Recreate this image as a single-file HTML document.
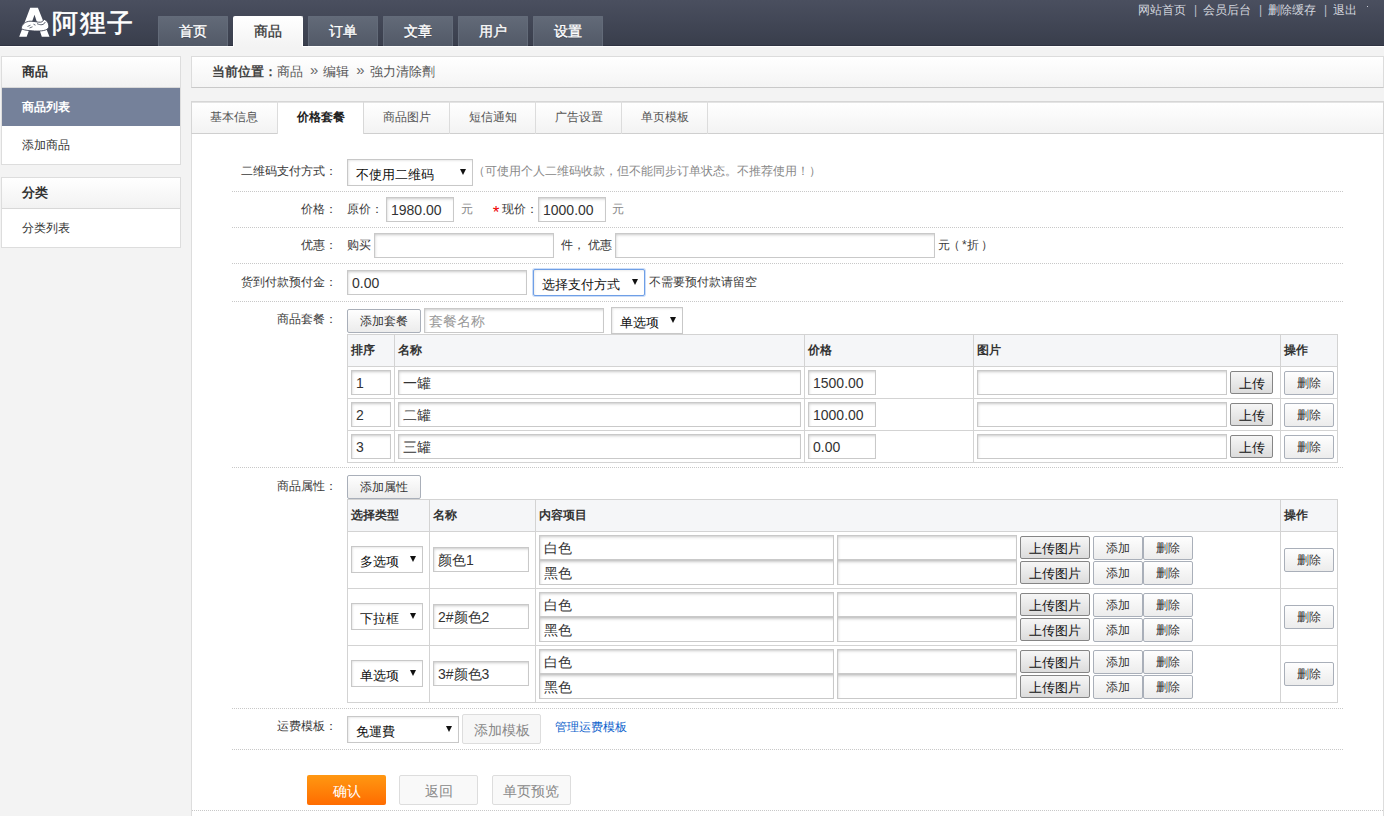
<!DOCTYPE html>
<html><head><meta charset="utf-8">
<style>
*{box-sizing:border-box}
html,body{margin:0;padding:0}
body{width:1384px;height:816px;overflow:hidden;position:relative;background:#f3f3f3;font-family:"Liberation Sans",sans-serif;font-size:12px;color:#333}
.a{position:absolute}
.hdr{left:0;top:0;width:1384px;height:46px;background:linear-gradient(#4a4f5f,#393e4c);border-bottom:1px solid #2f3342}
.hline{left:0;top:46px;width:1384px;height:1px;background:#fff}
.nav{top:16px;width:70px;height:30px;background:linear-gradient(#626a78,#525967);border:1px solid #636b79;border-bottom:0;color:#fff;font-size:14px;font-weight:500;-webkit-text-stroke:0.35px #fff;text-align:center;line-height:28px;border-radius:1px 1px 0 0;text-shadow:0 1px 1px rgba(0,0,0,.25)}
.nav.on{background:linear-gradient(#fff,#f3f3f3);border-color:#fff;color:#333;-webkit-text-stroke:0.3px #333;height:31px;line-height:28px;text-shadow:none;border-radius:2px 2px 0 0}
.toplinks{top:1px;color:#d3d6de;font-size:12px;line-height:18px;white-space:nowrap}
.tsep{color:#b9bdc6}
.toplinks i{font-style:normal;padding:0 6px;color:#b9bdc6}
.sbox{left:1px;width:180px;background:#fff;border:1px solid #ddd}
.shd{height:31px;line-height:30px;padding-left:20px;font-weight:bold;font-size:13px;color:#333;background:linear-gradient(#fff,#f2f2f2);border-bottom:1px solid #d8d8d8}
.sit{height:38px;line-height:38px;padding-left:20px;color:#333}
.sit.on{background:#75819a;color:#fff;font-weight:bold}
.crumb{left:191px;top:56px;width:1193px;height:32px;background:linear-gradient(#fff,#f4f4f4);border:1px solid #dcdcdc;border-bottom-color:#c9c9c9;line-height:28px;padding-left:20px;font-size:13px;color:#555}
.crumb b{color:#444}
.rq{font-size:15px;margin:0 5px 0 7px;color:#666;position:relative;top:-1px}
.panel{left:191px;top:101px;width:1193px;height:730px;background:#fff;border:1px solid #ddd}
.tabs{left:191px;top:101px;width:1193px;height:33px;background:linear-gradient(#fff,#f3f3f3);border:1px solid #d6d6d6;border-bottom-color:#cfcfcf;box-shadow:inset 0 1px 0 #e4e4e4}
.tab{top:101px;height:33px;line-height:33px;text-align:center;color:#555;font-size:12px;border-right:1px solid #dcdcdc}
.tab.on{background:#fff;color:#222;font-weight:bold;height:32px;top:102px;line-height:31px;border-left:1px solid #dcdcdc;border-right-color:#d8d8d8;box-shadow:inset 0 1px 0 #e6e6e6}
.dot{left:232px;width:1111px;height:1px;border-top:1px dotted #c8c8c8}
.lbl{width:110px;left:227px;text-align:right;color:#3a3a3a;line-height:16px}
.txt{color:#3a3a3a;line-height:16px;white-space:nowrap}
.inp{background:#fff;border:1px solid #c9c9c9;box-shadow:inset 1px 2px 3px -1px rgba(0,0,0,.22);font-size:14px;color:#333;padding-left:4px;padding-top:1px;white-space:nowrap;overflow:hidden}
.sel{background:#fff;border:1px solid #c8c8c8;box-shadow:inset 1px 1px 3px -1px rgba(0,0,0,.18);font-size:13.33px;color:#111;padding-left:8px;padding-top:2px;white-space:nowrap}
.sel:after{content:"";position:absolute;right:6px;top:9px;border-left:3px solid transparent;border-right:3px solid transparent;border-top:6px solid #111}
.btn{background:linear-gradient(#fefefe,#ececec);border:1px solid #a9afb9;border-radius:2px;text-align:center;color:#333;font-size:12px}
.ubtn{background:linear-gradient(#f6f6f6,#dcdcdc);border:1px solid #858585;border-radius:2px;text-align:center;color:#111;font-size:13.33px;padding-top:2px}
.tbl{border:1px solid #d3d3d3;background:#fff}
.th{background:#f5f6f8;border-bottom:1px solid #d3d3d3}
.vl{width:1px;background:#d3d3d3}
.hl{height:1px;background:#d3d3d3}
.thx{font-weight:bold;color:#333;line-height:16px}
</style></head><body>
<!-- header -->
<div class="a hdr"></div>
<div class="a hline"></div>
<svg class="a" style="left:16px;top:5px" width="38" height="35" viewBox="0 0 38 35">
  <path d="M14.2 2.8 L21.9 2.8 L33.5 31.8 L25.8 31.8 L18.5 9.7 L10.7 31.8 L3.2 31.8 Z" fill="#fff"/>
  <path d="M5.2 23.5 C5.8 19 9.5 16.5 14 16.2 C18 16 22 17.5 24.5 17.2 C26.5 17 27.5 15.5 28 14.2 C31.5 15.8 33.5 19.5 32.5 22.5 C31.5 25.5 25.5 26.3 18.5 26 C12 25.7 7 25 5.2 23.5 Z" fill="#fff" stroke="#3f4454" stroke-width="0.9"/>
  <path d="M21 18.6 C24.5 20.4 28 20.2 29.2 17" stroke="#4a5060" stroke-width="0.9" fill="none"/>
  <path d="M11.5 21.5 L14.5 20.2 M13.5 23 L16.5 21.8 M17.5 19.2 L19.5 20.2" stroke="#5a606c" stroke-width="0.9" fill="none"/>
</svg>
<div class="a" style="left:52px;top:3px;font-size:26px;color:#fff;line-height:40px;letter-spacing:1.5px;font-weight:normal;-webkit-text-stroke:0.6px #fff">阿狸子</div>
<div class="a nav" style="left:158px">首页</div>
<div class="a nav on" style="left:233px">商品</div>
<div class="a nav" style="left:308px">订单</div>
<div class="a nav" style="left:383px">文章</div>
<div class="a nav" style="left:458px">用户</div>
<div class="a nav" style="left:533px">设置</div>
<div class="a toplinks" style="left:1138px">网站首页</div><div class="a toplinks tsep" style="left:1194px">|</div>
<div class="a toplinks" style="left:1203px">会员后台</div><div class="a toplinks tsep" style="left:1259px">|</div>
<div class="a toplinks" style="left:1268px">删除缓存</div><div class="a toplinks tsep" style="left:1324px">|</div>
<div class="a toplinks" style="left:1333px">退出</div>
<div class="a" style="left:1367px;top:6px;width:1px;height:1px;background:#c9ccd4"></div>

<!-- sidebar -->
<div class="a sbox" style="top:56px;height:109px">
  <div class="shd">商品</div>
  <div class="sit on">商品列表</div>
  <div class="sit">添加商品</div>
</div>
<div class="a sbox" style="top:177px;height:71px">
  <div class="shd">分类</div>
  <div class="sit">分类列表</div>
</div>

<!-- breadcrumb -->
<div class="a crumb"><b>当前位置：</b>商品<span class="rq">&raquo;</span>编辑<span class="rq">&raquo;</span>強力清除劑</div>

<!-- panel -->
<div class="a panel"></div>
<div class="a tabs"></div>
<div class="a tab" style="left:191px;width:87px">基本信息</div>
<div class="a tab on" style="left:277px;width:87px">价格套餐</div>
<div class="a tab" style="left:364px;width:86px">商品图片</div>
<div class="a tab" style="left:450px;width:86px">短信通知</div>
<div class="a tab" style="left:536px;width:86px">广告设置</div>
<div class="a tab" style="left:622px;width:86px">单页模板</div>

<!-- form rows -->
<div class="a lbl" style="top:163px">二维码支付方式：</div>
<div class="a sel" style="left:347px;top:159px;width:126px;height:27px;line-height:25px">不使用二维码</div>
<div class="a txt" style="left:473px;top:163px;color:#888">（可使用个人二维码收款，但不能同步订单状态。不推荐使用！）</div>
<div class="a dot" style="top:191px"></div>

<div class="a lbl" style="top:201px">价格：</div>
<div class="a txt" style="left:347px;top:201px">原价：</div>
<div class="a inp" style="left:386px;top:197px;width:68px;height:25px;line-height:23px">1980.00</div>
<div class="a txt" style="left:461px;top:201px;color:#888">元</div>
<div class="a txt" style="left:491px;top:201px;color:#e00;font-size:17px;line-height:26px;font-family:'Liberation Mono',monospace">*</div><div class="a txt" style="left:502px;top:201px">现价：</div>
<div class="a inp" style="left:538px;top:197px;width:68px;height:25px;line-height:23px">1000.00</div>
<div class="a txt" style="left:612px;top:201px;color:#888">元</div>
<div class="a dot" style="top:227px"></div>

<div class="a lbl" style="top:237px">优惠：</div>
<div class="a txt" style="left:347px;top:237px">购买</div>
<div class="a inp" style="left:374px;top:233px;width:180px;height:25px"></div>
<div class="a txt" style="left:561px;top:237px">件，<span style="margin-left:3px">优惠</span></div>
<div class="a inp" style="left:615px;top:233px;width:320px;height:25px"></div>
<div class="a txt" style="left:938px;top:237px">元<span style="position:relative;left:-2.5px">（</span>*折<span style="position:relative;left:2.5px">）</span></div>
<div class="a dot" style="top:263px"></div>

<div class="a lbl" style="top:274px">货到付款预付金：</div>
<div class="a inp" style="left:347px;top:270px;width:180px;height:25px;line-height:23px">0.00</div>
<div class="a sel" style="left:533px;top:269px;width:112px;height:27px;line-height:25px;border-color:#6f9fe6;border-radius:2px;box-shadow:0 0 0 1px rgba(140,180,240,.45),inset 1px 1px 3px -1px rgba(0,0,0,.15)">选择支付方式</div>
<div class="a txt" style="left:649px;top:274px">不需要预付款请留空</div>
<div class="a dot" style="top:301px"></div>

<div class="a lbl" style="top:311px">商品套餐：</div>
<div class="a btn" style="left:347px;top:309px;width:74px;height:24px;line-height:22px">添加套餐</div>
<div class="a inp" style="left:424px;top:308px;width:180px;height:25px;line-height:23px;color:#999">套餐名称</div>
<div class="a sel" style="left:611px;top:307px;width:72px;height:27px;line-height:25px">单选项</div>

<div class="a tbl" style="left:347px;top:334px;width:991px;height:129px"></div>
<div class="a th" style="left:348px;top:335px;width:989px;height:32px"></div>
<div class="a hl" style="left:348px;top:398px;width:989px"></div>
<div class="a hl" style="left:348px;top:430px;width:989px"></div>
<div class="a vl" style="left:394px;top:335px;height:127px"></div>
<div class="a vl" style="left:804px;top:335px;height:127px"></div>
<div class="a vl" style="left:973px;top:335px;height:127px"></div>
<div class="a vl" style="left:1280px;top:335px;height:127px"></div>
<div class="a thx" style="left:351px;top:342px">排序</div>
<div class="a thx" style="left:398px;top:342px">名称</div>
<div class="a thx" style="left:808px;top:342px">价格</div>
<div class="a thx" style="left:977px;top:342px">图片</div>
<div class="a thx" style="left:1284px;top:342px">操作</div>
<div class="a inp" style="left:351px;top:370px;width:40px;height:25px;line-height:23px">1</div>
<div class="a inp" style="left:398px;top:370px;width:403px;height:25px;line-height:23px">一罐</div>
<div class="a inp" style="left:808px;top:370px;width:68px;height:25px;line-height:23px">1500.00</div>
<div class="a inp" style="left:977px;top:370px;width:250px;height:25px"></div>
<div class="a ubtn" style="left:1230px;top:371px;width:43px;height:23px;line-height:19px">上传</div>
<div class="a btn" style="left:1284px;top:371px;width:50px;height:24px;line-height:22px">删除</div>
<div class="a inp" style="left:351px;top:402px;width:40px;height:25px;line-height:23px">2</div>
<div class="a inp" style="left:398px;top:402px;width:403px;height:25px;line-height:23px">二罐</div>
<div class="a inp" style="left:808px;top:402px;width:68px;height:25px;line-height:23px">1000.00</div>
<div class="a inp" style="left:977px;top:402px;width:250px;height:25px"></div>
<div class="a ubtn" style="left:1230px;top:403px;width:43px;height:23px;line-height:19px">上传</div>
<div class="a btn" style="left:1284px;top:403px;width:50px;height:24px;line-height:22px">删除</div>
<div class="a inp" style="left:351px;top:434px;width:40px;height:25px;line-height:23px">3</div>
<div class="a inp" style="left:398px;top:434px;width:403px;height:25px;line-height:23px">三罐</div>
<div class="a inp" style="left:808px;top:434px;width:68px;height:25px;line-height:23px">0.00</div>
<div class="a inp" style="left:977px;top:434px;width:250px;height:25px"></div>
<div class="a ubtn" style="left:1230px;top:435px;width:43px;height:23px;line-height:19px">上传</div>
<div class="a btn" style="left:1284px;top:435px;width:50px;height:24px;line-height:22px">删除</div>

<div class="a dot" style="top:467px"></div>

<div class="a lbl" style="top:478px">商品属性：</div>
<div class="a btn" style="left:347px;top:475px;width:74px;height:24px;line-height:22px">添加属性</div>

<div class="a tbl" style="left:347px;top:499px;width:991px;height:204px"></div>
<div class="a th" style="left:348px;top:500px;width:989px;height:32px"></div>
<div class="a hl" style="left:348px;top:588px;width:989px"></div>
<div class="a hl" style="left:348px;top:645px;width:989px"></div>
<div class="a vl" style="left:429px;top:500px;height:202px"></div>
<div class="a vl" style="left:535px;top:500px;height:202px"></div>
<div class="a vl" style="left:1280px;top:500px;height:202px"></div>
<div class="a thx" style="left:351px;top:507px">选择类型</div>
<div class="a thx" style="left:433px;top:507px">名称</div>
<div class="a thx" style="left:539px;top:507px">内容项目</div>
<div class="a thx" style="left:1284px;top:507px">操作</div>
<div class="a sel" style="left:351px;top:546px;width:72px;height:27px;line-height:25px">多选项</div>
<div class="a inp" style="left:433px;top:547px;width:96px;height:25px;line-height:23px">颜色1</div>
<div class="a inp" style="left:539px;top:535px;width:295px;height:25px;line-height:23px">白色</div>
<div class="a inp" style="left:539px;top:560px;width:295px;height:25px;line-height:23px">黑色</div>
<div class="a inp" style="left:837px;top:535px;width:180px;height:25px"></div>
<div class="a inp" style="left:837px;top:560px;width:180px;height:25px"></div>
<div class="a ubtn" style="left:1020px;top:536px;width:70px;height:23px;line-height:19px">上传图片</div>
<div class="a ubtn" style="left:1020px;top:561px;width:70px;height:23px;line-height:19px">上传图片</div>
<div class="a btn" style="left:1093px;top:536px;width:50px;height:24px;line-height:22px">添加</div>
<div class="a btn" style="left:1143px;top:536px;width:50px;height:24px;line-height:22px">删除</div>
<div class="a btn" style="left:1093px;top:561px;width:50px;height:24px;line-height:22px">添加</div>
<div class="a btn" style="left:1143px;top:561px;width:50px;height:24px;line-height:22px">删除</div>
<div class="a btn" style="left:1284px;top:548px;width:50px;height:24px;line-height:22px">删除</div>
<div class="a sel" style="left:351px;top:603px;width:72px;height:27px;line-height:25px">下拉框</div>
<div class="a inp" style="left:433px;top:604px;width:96px;height:25px;line-height:23px">2#颜色2</div>
<div class="a inp" style="left:539px;top:592px;width:295px;height:25px;line-height:23px">白色</div>
<div class="a inp" style="left:539px;top:617px;width:295px;height:25px;line-height:23px">黑色</div>
<div class="a inp" style="left:837px;top:592px;width:180px;height:25px"></div>
<div class="a inp" style="left:837px;top:617px;width:180px;height:25px"></div>
<div class="a ubtn" style="left:1020px;top:593px;width:70px;height:23px;line-height:19px">上传图片</div>
<div class="a ubtn" style="left:1020px;top:618px;width:70px;height:23px;line-height:19px">上传图片</div>
<div class="a btn" style="left:1093px;top:593px;width:50px;height:24px;line-height:22px">添加</div>
<div class="a btn" style="left:1143px;top:593px;width:50px;height:24px;line-height:22px">删除</div>
<div class="a btn" style="left:1093px;top:618px;width:50px;height:24px;line-height:22px">添加</div>
<div class="a btn" style="left:1143px;top:618px;width:50px;height:24px;line-height:22px">删除</div>
<div class="a btn" style="left:1284px;top:605px;width:50px;height:24px;line-height:22px">删除</div>
<div class="a sel" style="left:351px;top:660px;width:72px;height:27px;line-height:25px">单选项</div>
<div class="a inp" style="left:433px;top:661px;width:96px;height:25px;line-height:23px">3#颜色3</div>
<div class="a inp" style="left:539px;top:649px;width:295px;height:25px;line-height:23px">白色</div>
<div class="a inp" style="left:539px;top:674px;width:295px;height:25px;line-height:23px">黑色</div>
<div class="a inp" style="left:837px;top:649px;width:180px;height:25px"></div>
<div class="a inp" style="left:837px;top:674px;width:180px;height:25px"></div>
<div class="a ubtn" style="left:1020px;top:650px;width:70px;height:23px;line-height:19px">上传图片</div>
<div class="a ubtn" style="left:1020px;top:675px;width:70px;height:23px;line-height:19px">上传图片</div>
<div class="a btn" style="left:1093px;top:650px;width:50px;height:24px;line-height:22px">添加</div>
<div class="a btn" style="left:1143px;top:650px;width:50px;height:24px;line-height:22px">删除</div>
<div class="a btn" style="left:1093px;top:675px;width:50px;height:24px;line-height:22px">添加</div>
<div class="a btn" style="left:1143px;top:675px;width:50px;height:24px;line-height:22px">删除</div>
<div class="a btn" style="left:1284px;top:662px;width:50px;height:24px;line-height:22px">删除</div>

<div class="a dot" style="top:708px"></div>

<div class="a lbl" style="top:718px">运费模板：</div>
<div class="a sel" style="left:347px;top:716px;width:112px;height:27px;line-height:25px">免運費</div>
<div class="a" style="left:462px;top:714px;width:79px;height:30px;line-height:30px;border:1px solid #ddd;background:#f7f7f7;color:#888;font-size:14px;text-align:center;border-radius:2px">添加模板</div>
<div class="a txt" style="left:555px;top:719px;color:#0d62cc">管理运费模板</div>
<div class="a dot" style="top:749px"></div>

<div class="a" style="left:307px;top:775px;width:79px;height:30px;line-height:32px;background:linear-gradient(#ff9812,#ff6c00);border-radius:2px;color:#fff;font-size:14px;text-align:center">确认</div>
<div class="a" style="left:399px;top:775px;width:79px;height:30px;line-height:30px;background:#f9f9f9;border:1px solid #ddd;border-radius:2px;color:#888;font-size:14px;text-align:center">返回</div>
<div class="a" style="left:492px;top:775px;width:79px;height:30px;line-height:30px;background:#f9f9f9;border:1px solid #ddd;border-radius:2px;color:#888;font-size:14px;text-align:center;text-indent:-1px">单页预览</div>
<div class="a" style="left:192px;top:810px;width:1191px;height:1px;border-top:1px dotted #c8c8c8"></div>
</body></html>
